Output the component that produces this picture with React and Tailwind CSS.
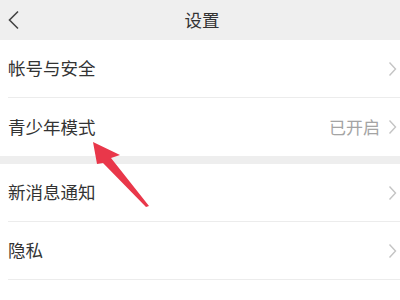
import React from "react";

const font = { fontFamily: '"Noto Sans CJK SC", "Noto Sans", sans-serif' };

function Chevron() {
  return (
    <svg width="9" height="16" viewBox="0 0 9 16" className="ml-[8px]">
      <path d="M1.5 1.5 L7.5 8 L1.5 14.5" fill="none" stroke="#c4c4c4" strokeWidth="1.4" />
    </svg>
  );
}

function Row({ label, value, last }) {
  return (
    <div className="pl-[8px] bg-white">
      <div className={"h-[58px] flex items-center pr-[3px] " + (last ? "" : "border-b border-[#ececec]")}>
        <span className="flex-1 text-[17.5px] text-[#333]">{label}</span>
        {value && <span className="text-[17px] text-[#a4a4a4]">{value}</span>}
        <Chevron />
      </div>
    </div>
  );
}

export default function App() {
  return (
    <div className="relative w-[400px] h-[300px] overflow-hidden bg-white" style={font}>
      <div className="h-[40px] bg-[#efefef] flex items-center relative">
        <svg width="14" height="20" viewBox="0 0 14 20" className="ml-[7px]">
          <path d="M11 1.5 L2.5 10 L11 18.5" fill="none" stroke="#444" strokeWidth="1.6" />
        </svg>
        <span className="absolute left-0 right-0 text-center text-[17.5px] text-[#333] pl-[4px]">设置</span>
      </div>
      <Row label="帐号与安全" />
      <Row label="青少年模式" value="已开启" last />
      <div className="h-[8px] bg-[#eeeeee]" />
      <Row label="新消息通知" />
      <Row label="隐私" />
      <Row label="通用" last />
      <svg className="absolute left-0 top-0" width="400" height="300" viewBox="0 0 400 300">
        <polygon
          points="93,142 120,155 111,158 149,206 146,207 103,163 97,164"
          fill="#e9374a"
        />
      </svg>
    </div>
  );
}
